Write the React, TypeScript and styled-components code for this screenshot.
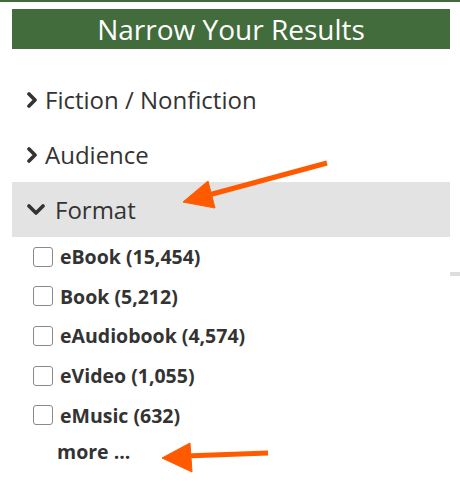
import styled, { createGlobalStyle } from 'styled-components';

const GlobalStyle = createGlobalStyle`
  html, body {
    margin: 0;
    padding: 0;
    background: #ffffff;
  }
  body {
    font-family: "Open Sans", "Noto Sans", sans-serif;
    color: #333333;
  }
`;

const Page = styled.div`
  position: relative;
  width: 460px;
  height: 481px;
  overflow: hidden;
`;

const TopLine = styled.div`
  height: 2px;
  background: #426b3b;
`;

const Panel = styled.div`
  margin: 7px 10px 0 12px;
`;

const Heading = styled.h2`
  margin: 0;
  height: 40px;
  background: #436c3c;
  color: #ffffff;
  font-size: 28px;
  font-weight: 400;
  line-height: 40px;
  text-align: center;
`;

const FacetList = styled.div`
  padding-top: 23px;
`;

const FacetRow = styled.div<{ $open?: boolean }>`
  display: flex;
  align-items: center;
  height: 55px;
  padding-left: 15px;
  background: ${(p) => (p.$open ? '#e3e3e3' : 'transparent')};
  font-size: 24px;
  color: #333333;

  svg {
    flex-shrink: 0;
    margin-right: ${(p) => (p.$open ? '10px' : '6px')};
  }
`;

const Options = styled.ul`
  list-style: none;
  margin: 0;
  padding: 0 0 0 21px;
`;

const Option = styled.li`
  display: flex;
  align-items: center;
  height: 39.6px;
  font-size: 19.5px;
  font-weight: 700;
  color: #333333;
`;

const Box = styled.span`
  box-sizing: border-box;
  width: 20px;
  height: 20px;
  border: 1px solid #8a8a8a;
  border-radius: 3px;
  background: #ffffff;
  margin-right: 7px;
`;

const More = styled.div`
  padding-left: 45px;
  height: 38px;
  line-height: 34px;
  font-size: 19.5px;
  font-weight: 700;
  color: #333333;
`;

const EdgeMark = styled.div`
  position: absolute;
  right: 0;
  top: 272px;
  width: 10px;
  height: 4px;
  background: #dddddd;
`;

const Annotations = styled.svg`
  position: absolute;
  left: 0;
  top: 0;
  pointer-events: none;
`;

const ChevronRight = () => (
  <svg width="12" height="16" viewBox="0 0 12 16">
    <polyline
      points="2,2 8,8 2,14"
      fill="none"
      stroke="#333"
      strokeWidth="3.6"
      strokeLinecap="round"
      strokeLinejoin="round"
    />
  </svg>
);

const ChevronDown = () => (
  <svg width="18" height="12" viewBox="0 0 18 12">
    <polyline
      points="2,2 9,9 16,2"
      fill="none"
      stroke="#333"
      strokeWidth="3.6"
      strokeLinecap="round"
      strokeLinejoin="round"
    />
  </svg>
);

const formats = [
  'eBook (15,454)',
  'Book (5,212)',
  'eAudiobook (4,574)',
  'eVideo (1,055)',
  'eMusic (632)',
];

export default function App() {
  return (
    <Page>
      <GlobalStyle />
      <TopLine />
      <Panel>
        <Heading>Narrow Your Results</Heading>
        <FacetList>
          <FacetRow>
            <ChevronRight />
            Fiction / Nonfiction
          </FacetRow>
          <FacetRow>
            <ChevronRight />
            Audience
          </FacetRow>
          <FacetRow $open>
            <ChevronDown />
            Format
          </FacetRow>
          <Options>
            {formats.map((f) => (
              <Option key={f}>
                <Box />
                {f}
              </Option>
            ))}
          </Options>
          <More>more ...</More>
        </FacetList>
      </Panel>
      <EdgeMark />
      <Annotations width="460" height="481" viewBox="0 0 460 481">
        <g fill="#ff5a00" stroke="#ff5a00">
          <line x1="327" y1="163" x2="205" y2="196" strokeWidth="5" />
          <polygon points="183,202 208,181 215,208" strokeWidth="1" strokeLinejoin="round" />
          <line x1="268" y1="453" x2="185" y2="456" strokeWidth="5" />
          <polygon points="162,458 190,443 192,472" strokeWidth="1" strokeLinejoin="round" />
        </g>
      </Annotations>
    </Page>
  );
}
